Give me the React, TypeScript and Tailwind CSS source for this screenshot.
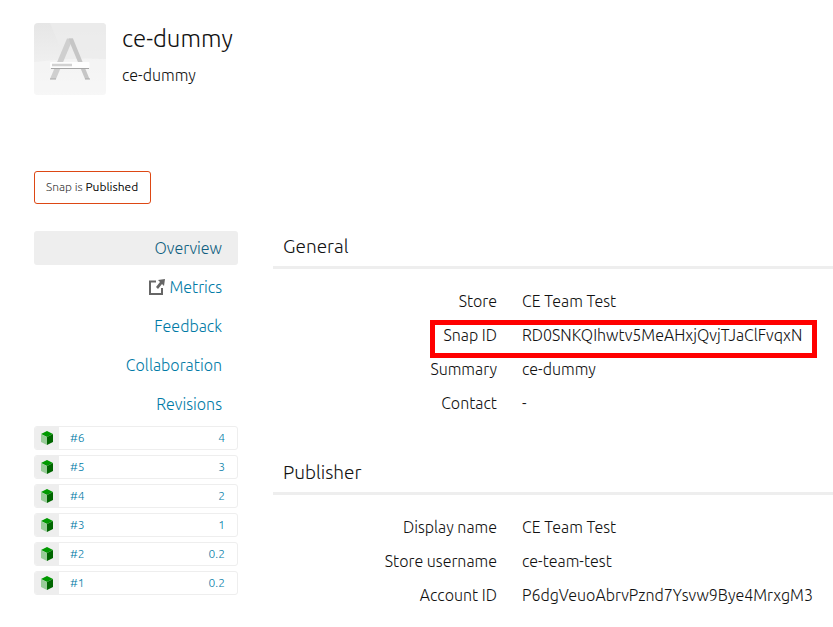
import type { ReactNode } from "react";

const links = ["Overview", "Metrics", "Feedback", "Collaboration", "Revisions"];

const revisions = [
  { id: "#6", version: "4" },
  { id: "#5", version: "3" },
  { id: "#4", version: "2" },
  { id: "#3", version: "1" },
  { id: "#2", version: "0.2" },
  { id: "#1", version: "0.2" },
];

const general = [
  { label: "Store", value: "CE Team Test" },
  { label: "Snap ID", value: "RD0SNKQIhwtv5MeAHxjQvjTJaClFvqxN", marked: true },
  { label: "Summary", value: "ce-dummy" },
  { label: "Contact", value: "-" },
];

const publisher = [
  { label: "Display name", value: "CE Team Test" },
  { label: "Store username", value: "ce-team-test" },
  { label: "Account ID", value: "P6dgVeuoAbrvPznd7Ysvw9Bye4MrxgM3" },
];

function SnapLogo() {
  return (
    <svg viewBox="0 0 72 72" className="size-18 shrink-0" aria-hidden="true">
      <defs>
        <linearGradient id="tile" x1="0" y1="0" x2="0" y2="1">
          <stop offset="0" stopColor="#e6e6e6" />
          <stop offset="1" stopColor="#f7f7f7" />
        </linearGradient>
        <clipPath id="round">
          <rect width="72" height="72" rx="4" />
        </clipPath>
      </defs>
      <g clipPath="url(#round)">
        <rect width="72" height="72" fill="url(#tile)" />
        <path d="M16 0H72V36Q48 34 31 37Z" fill="#ececec" opacity="0.7" />
        <path d="M0 39Q36 34 72 36V72H0Z" fill="#f6f6f6" opacity="0.6" />
        <path d="M33 15.500h6L22 56h-6Z" fill="#cfcfcf" />
        <path d="M35 15.500h4L55.500 56H51L36 20Z" fill="#c6c6c6" />
        <path d="M16 56h6M51 56h5" stroke="#a9a9a9" />
        <rect x="16" y="39" width="39.500" height="6" rx="1" fill="#fefefe" />
        <path d="M17 45.500h38" stroke="#a6a6a6" />
        <path d="M18 42h20" stroke="#d2d2d2" strokeWidth="2.500" />
      </g>
    </svg>
  );
}

function ExternalIcon() {
  return (
    <svg viewBox="0 0 16 16" className="size-4" aria-hidden="true">
      <path d="M7 2.500H1V15H13V9" fill="none" stroke="#666" strokeWidth="2" />
      <path d="M9 1L16 0L15 7L13 5L9 10L7 8L11 3Z" fill="#666" />
    </svg>
  );
}

function CubeIcon() {
  return (
    <svg viewBox="0 0 12 14" className="h-3.5 w-3" aria-hidden="true">
      <path d="M6 0L12 3L6 6L0 3Z" fill="#090" />
      <path d="M0 3L6 6V14L0 11Z" fill="#99cc99" />
      <path d="M12 3L6 6V14L12 11Z" fill="#060" />
    </svg>
  );
}

type Row = { label: string; value: string; marked?: boolean };

function Section({ title, rows }: { title: string; rows: Row[] }): ReactNode {
  return (
    <section>
      <h2 className="border-b-3 border-[#eee] px-2.5 pb-[5px] text-[19px] leading-[30px] font-light">{title}</h2>
      <dl className="pt-[15px]">
        {rows.map((row) => (
          <div key={row.label} className="relative grid h-[34px] grid-cols-[2fr_3fr] items-center text-base">
            <dt className="text-right">{row.label}</dt>
            <dd className="pl-[25px] whitespace-nowrap">{row.value}</dd>
            {row.marked && <span className="absolute top-0.5 right-4 -bottom-1.5 left-[157px] border-[5px] border-[#f00]" />}
          </div>
        ))}
      </dl>
    </section>
  );
}

export default function App() {
  return (
    <div className="overflow-x-clip bg-white pt-[23px] pb-4 pl-[34px] font-['Ubuntu','Open_Sans',sans-serif] font-light text-[#111]">
      <header className="flex gap-4">
        <SnapLogo />
        <div>
          <h1 className="text-2xl leading-8 font-light">ce-dummy</h1>
          <p className="pt-2 text-base leading-6">ce-dummy</p>
        </div>
      </header>

      <p className="mt-[76px] flex h-[33px] w-fit items-center rounded-[3px] border border-[#dd4814] pr-3 pb-0.5 pl-[11px] text-xs text-[#333]">
        <span>
          Snap is <strong className="font-normal text-[#000]">Published</strong>
        </span>
      </p>

      <div className="mt-[27px] flex gap-[35px]">
        <aside className="w-[204px] shrink-0">
          <nav className="flex flex-col gap-[5px]">
            {links.map((name, i) => (
              <a
                key={name}
                href="#"
                className={`flex h-[34px] items-center justify-end gap-1 rounded-[3px] px-4 text-base ${
                  i === 0 ? "bg-[#eee] text-[#0f5f80]" : "text-[#007aa6]"
                }`}
              >
                {name === "Metrics" && <ExternalIcon />}
                {name}
              </a>
            ))}
          </nav>
          <ul className="mt-[5px] flex flex-col gap-[5px]">
            {revisions.map((rev) => (
              <li key={rev.id}>
                <a
                  href="#"
                  className="flex h-6 overflow-hidden rounded-[3px] border border-[#eee] text-xs text-[#007aa6]"
                >
                  <span className="flex w-6 items-center justify-center bg-[#eee]">
                    <CubeIcon />
                  </span>
                  <span className="flex flex-1 items-center justify-between pr-3 pl-[11px]">
                    <span>{rev.id}</span>
                    <span>{rev.version}</span>
                  </span>
                </a>
              </li>
            ))}
          </ul>
        </aside>

        <main className="flex min-w-0 flex-1 flex-col gap-[37px]">
          <Section title="General" rows={general} />
          <Section title="Publisher" rows={publisher} />
        </main>
      </div>
    </div>
  );
}
